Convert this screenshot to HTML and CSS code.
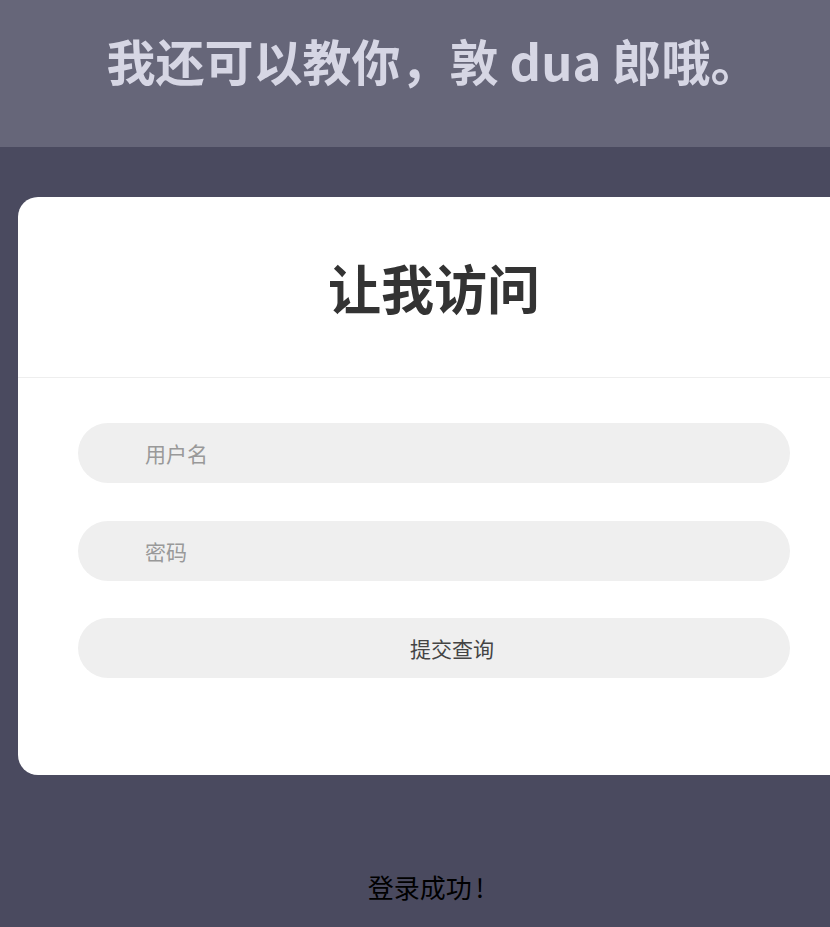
FILE: index.html
```html
<!DOCTYPE html>
<html lang="zh-CN">
<head>
<meta charset="utf-8">
<title>让我访问</title>
<link rel="stylesheet" href="styles.css">
</head>
<body>
<header class="top">
  <h1 class="top-title">我还可以教你，敦 dua 郎哦。</h1>
</header>
<main class="card">
  <div class="card-head">
    <h2 class="card-title">让我访问</h2>
  </div>
  <form class="form">
    <input class="field" type="text" placeholder="用户名">
    <input class="field" type="password" placeholder="密码">
    <button class="submit" type="button">提交查询</button>
  </form>
</main>
<p class="msg">登录成功<span class="bang">!</span></p>
</body>
</html>
```

FILE: styles.css
```css
html, body {
  margin: 0;
  padding: 0;
}
body {
  background: #4a4a5f;
  font-family: "Noto Sans CJK SC", "Noto Sans", sans-serif;
  overflow-x: hidden;
  min-height: 927px;
}
.top {
  background: #666679;
  height: 147px;
  box-sizing: border-box;
  padding-top: 24px;
  padding-left: 36px;
}
.top-title {
  margin: 0;
  text-align: center;
  font-size: 49px;
  line-height: 72px;
  font-weight: 700;
  color: #d6d6e4;
}
.card {
  display: block;
  margin: 50px -20px 0 18px;
  background: #fff;
  border-radius: 20px;
}
.card-head {
  height: 180px;
  display: flex;
  align-items: center;
  justify-content: center;
  border-bottom: 1px solid #eeeeee;
}
.card-title {
  margin: 0;
  font-size: 53px;
  font-weight: 700;
  color: #333;
  line-height: 1.2;
  padding-top: 2px;
}
.form {
  display: flex;
  flex-direction: column;
  gap: 38px;
  padding: 45px 60px 97px 60px;
}
.field, .submit {
  height: 60px;
  border: none;
  border-radius: 30px;
  background: #efefef;
  font-family: "Noto Sans CJK SC", sans-serif;
  font-size: 21px;
  outline: none;
  box-sizing: border-box;
  width: 100%;
}
.field {
  padding: 0 0 0 67px;
  color: #333;
}
.field::placeholder {
  color: #999;
}
.submit {
  margin-top: -1px;
  color: #444;
  padding-left: 42px;
  cursor: pointer;
}
.msg {
  margin: 96px 0 0 0;
  text-align: center;
  padding-left: 22px;
  font-size: 26px;
  line-height: 32px;
  color: #000;
}
.bang {
  margin-left: 4px;
}
```
